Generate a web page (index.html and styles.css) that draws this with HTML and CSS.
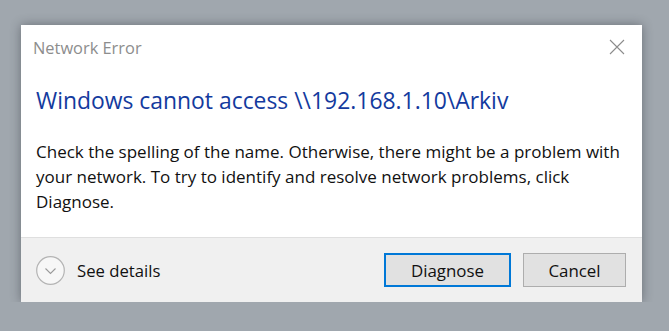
FILE: index.html
```html
<!DOCTYPE html>
<html lang="en">
<head>
    <meta charset="UTF-8">
    <title>Network Error</title>
    <link rel="stylesheet" href="styles.css">
</head>
<body>

<div class="dialog">
    <div class="titlebar">
        <span class="title">Network Error</span>
        <svg class="close" width="16" height="16" viewBox="0 0 16 16">
            <path d="M1 1 L15 15 M15 1 L1 15" stroke="#8c8c8c" stroke-width="1.1" fill="none"/>
        </svg>
    </div>

    <div class="content">
        <h1 class="instruction">Windows cannot access \\192.168.1.10\Arkiv</h1>
        <p class="message">Check the spelling of the name. Otherwise, there might be a problem with your network. To try to identify and resolve network problems, click Diagnose.</p>
    </div>

    <div class="footer">
        <div class="details">
            <span class="expander">
                <svg width="29" height="29" viewBox="0 0 29 29">
                    <circle cx="14.5" cy="14.5" r="13.8" stroke="#b4b4b4" stroke-width="1.2" fill="#f7f7f7"/>
                    <path d="M9.5 12.5 L14.5 17.5 L19.5 12.5" stroke="#9a9a9a" stroke-width="1.1" fill="none"/>
                </svg>
            </span>
            <span class="details-label">See details</span>
        </div>
        <div class="buttons">
            <button class="btn primary">Diagnose</button>
            <button class="btn">Cancel</button>
        </div>
    </div>
</div>

</body>
</html>
```

FILE: styles.css
```css
body {
    margin: 0;
    padding: 0;
    background-color: #a0a7ae;
    font-family: "Open Sans", "Noto Sans", sans-serif;
}
.dialog {
    display: flex;
    flex-direction: column;
    width: 621px;
    height: 277px;
    margin: 25px 0 0 21px;
    background-color: #fff;
    box-shadow: 0 0 10px rgba(40, 45, 50, 0.45);
}
.titlebar {
    display: flex;
    align-items: center;
    justify-content: space-between;
    height: 44px;
    padding: 0 17px 0 12px;
}
.title {
    font-size: 16.4px;
    color: #8d8d8d;
}
.close {
    margin-top: -1px;
}
.content {
    flex: 1;
    padding: 17px 15px 0 15px;
}
.instruction {
    margin: 0;
    font-size: 22.9px;
    font-weight: normal;
    line-height: 30px;
    color: #133a9e;
}
.message {
    margin: 23px 0 0 0;
    font-size: 17px;
    line-height: 25px;
    color: #111;
}
.footer {
    display: flex;
    align-items: center;
    justify-content: space-between;
    height: 64px;
    padding: 0 16px 0 15px;
    background-color: #f0f0f0;
    border-top: 1px solid #dfdfdf;
}
.details {
    display: flex;
    align-items: center;
    gap: 12px;
}
.expander svg {
    display: block;
}
.details-label {
    font-size: 16.7px;
    color: #111;
}
.buttons {
    display: flex;
    gap: 12px;
}
.btn {
    height: 34px;
    width: 103px;
    padding: 0;
    font-family: "Open Sans", "Noto Sans", sans-serif;
    font-size: 16.9px;
    color: #111;
    background-color: #e1e1e1;
    border: 1px solid #adadad;
}
.btn.primary {
    width: 127px;
    border: 2px solid #0078d7;
}
```
